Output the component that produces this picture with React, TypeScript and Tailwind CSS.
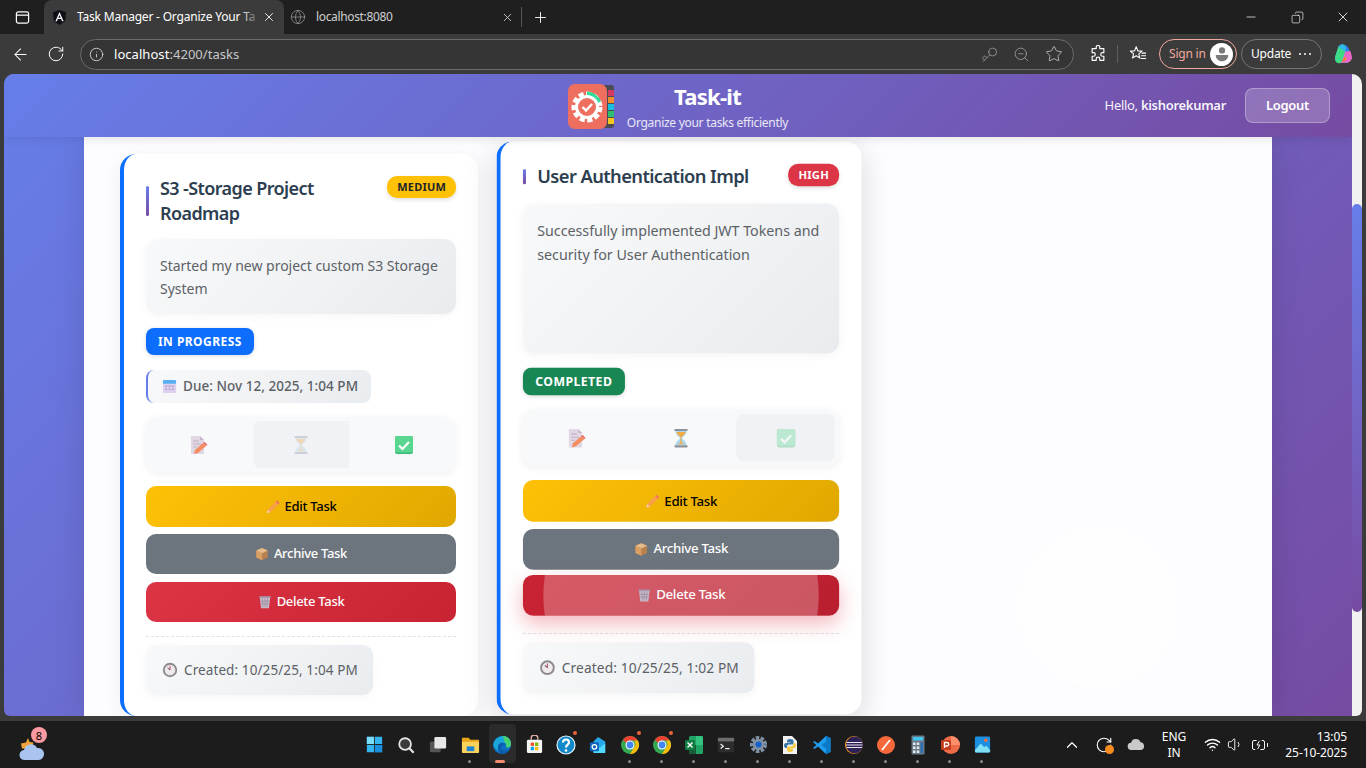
import React from "react";
import {
  ArrowLeft,
  BatteryCharging,
  ChevronUp,
  Copy,
  Globe,
  Info,
  Key,
  Minus,
  Plus,
  RotateCw,
  Star,
  Volume1,
  Wifi,
  X,
  ZoomOut,
} from "lucide-react";

/* emoji drawings, the sandbox has no colour emoji font */
const MemoIcon = ({ className = "" }: { className?: string }) => (
  <svg viewBox="0 0 20 20" className={className}>
    <path d="M3 1h9l4 4v14H3z" fill="#dccfe0" />
    <path d="M12 1l4 4h-4z" fill="#b9a8c2" />
    <path d="M5 6h6M5 9h8M5 12h4" stroke="#b3a3b8" strokeWidth="1" />
    <path d="M7 15l8-7 3 3-8 7-4 1z" fill="#f4733a" />
    <path d="M15 8l1.500-1.300 3 3L18 11z" fill="#e6534a" />
  </svg>
);
const HourglassIcon = ({ className = "" }: { className?: string }) => (
  <svg viewBox="0 0 20 20" className={className}>
    <path d="M4.500 3h11c0 4-4 5.500-4.500 7 .5 1.500 4.500 3 4.500 7h-11c0-4 4-5.500 4.500-7-.5-1.500-4.500-3-4.500-7z" fill="#a9d8f2" />
    <path d="M5.500 4h9c-.3 2.500-3.800 4-4.500 6-.7-2-4.200-3.500-4.500-6z" fill="#f2ac45" />
    <path d="M9.500 10h1l.3 4.500 3.200 1.500H6l3.200-1.500z" fill="#f2ac45" />
    <rect x="3.500" y="1" width="13" height="2" rx=".8" fill="#8c9298" />
    <rect x="3.500" y="17" width="13" height="2" rx=".8" fill="#8c9298" />
  </svg>
);
const CheckIcon = ({ className = "" }: { className?: string }) => (
  <svg viewBox="0 0 20 20" className={className}>
    <rect x="1" y="1" width="18" height="18" rx="2" fill="#3fb978" />
    <rect x="1" y="1" width="18" height="16.500" rx="2" fill="#59d68f" />
    <path d="M5 10.500l3.500 3.500L15 7" fill="none" stroke="#fff" strokeWidth="2.200" />
  </svg>
);
const PencilIcon = () => (
  <svg viewBox="0 0 16 16" className="h-[14px] w-[14px] shrink-0">
    <path d="M1 15l1-4 9-9 3 3-9 9z" fill="#f9a04b" />
    <path d="M1 15l1-4 3 3z" fill="#f3d3a8" />
    <path d="M11 2l1.500-1.500 3 3L14 5z" fill="#ef6c6c" />
  </svg>
);
const BoxIcon = () => (
  <svg viewBox="0 0 16 16" className="h-[14px] w-[14px] shrink-0">
    <path d="M8 1l6.500 3v8L8 15l-6.500-3V4z" fill="#b9814f" />
    <path d="M1.500 4L8 7v8l-6.500-3z" fill="#d9a066" />
    <path d="M8 1l6.500 3L8 7 1.500 4z" fill="#e6bb8b" />
  </svg>
);
const BinIcon = () => (
  <svg viewBox="0 0 16 16" className="h-[14px] w-[14px] shrink-0">
    <path d="M2 2h12l-1.500 13h-9z" fill="#c9bccb" />
    <path d="M5 4l.8 10M8 4v10M11 4l-.8 10M3 7h10M3.500 10h9" stroke="#8f7f95" strokeWidth=".7" />
    <rect x="1.500" y="1.500" width="13" height="2" rx=".6" fill="#a795ab" />
  </svg>
);
const ClockIcon = () => (
  <svg viewBox="0 0 16 16" className="h-4 w-4 shrink-0">
    <circle cx="8" cy="8" r="7.200" fill="#8d8a8f" />
    <circle cx="8" cy="8" r="5.300" fill="#efe9ec" />
    <path d="M8 8V3.800" stroke="#c5446b" strokeWidth="1" />
    <path d="M8 8L5.500 5.800" stroke="#555" strokeWidth="1" />
  </svg>
);
const CalendarIcon = () => (
  <svg viewBox="0 0 16 16" className="h-[15px] w-[15px] shrink-0">
    <rect x="1" y="1" width="14" height="14" rx="1.500" fill="#ddd0ee" />
    <path d="M2.500 1h11A1.500 1.500 0 0115 2.500V5H1V2.500A1.500 1.500 0 012.500 1z" fill="#58aef0" />
    <path d="M3.500 7h2v1.500h-2zM7 7h2v1.500H7zM10.500 7h2v1.500h-2zM3.500 10h2v1.500h-2zM7 10h2v1.500H7zM10.500 10h2v1.500h-2z" fill="#a99cc4" />
  </svg>
);

const AppLogo = () => (
  <svg viewBox="0 0 46 46" className="h-[46px] w-[46px] shrink-0">
    <rect x="34" y="2" width="12" height="43" rx="3" fill="#4c4a55" />
    <rect x="40" y="7" width="6" height="6" fill="#d23a63" />
    <rect x="40" y="14" width="6" height="6" fill="#f28a2e" />
    <rect x="40" y="21" width="6" height="6" fill="#19bfe0" />
    <rect x="40" y="28" width="6" height="6" fill="#2fbf71" />
    <rect x="40" y="35" width="6" height="6" fill="#f4c61f" />
    <rect x="0" y="1" width="39" height="45" rx="7" fill="#ee6f5f" />
    <circle cx="19" cy="24" r="13" fill="none" stroke="#fff" strokeWidth="5" strokeDasharray="5 2.500" />
    <path d="M19 8.500a15.500 15.500 0 0114 10l-4.500 2a11 11 0 00-9.500-7.500z" fill="#2fdc9a" />
    <circle cx="19" cy="24" r="10.500" fill="none" stroke="#fff" strokeWidth="3" />
    <path d="M14.500 24l3.500 3.500 6-6.500" fill="none" stroke="#fff" strokeWidth="2.400" />
  </svg>
);

const AngularIcon = () => (
  <svg viewBox="0 0 16 16" className="h-[15px] w-[15px] shrink-0">
    <path d="M8 0l7 2.500-1 9.500L8 16l-6-4-1-9.500z" fill="#0f0f17" />
    <path d="M8 2.200L3.600 12h1.700l.9-2.300h3.600l.9 2.300h1.700zM6.800 8.300L8 5.400l1.200 2.900z" fill="#fff" />
  </svg>
);

/* taskbar icons */
const WindowsLogo = () => (
  <svg viewBox="0 0 20 20" className="h-[17px] w-[17px]">
    <path d="M1 1h8.500v8.500H1zM10.500 1H19v8.500h-8.500zM1 10.500h8.500V19H1zM10.500 10.500H19V19h-8.500z" fill="#35b5f0" />
    <path d="M1 1h8.500v8.500H1z" fill="#7adcfb" />
    <path d="M10.500 10.500H19V19h-8.500z" fill="#1a8fe0" />
  </svg>
);
const SearchLogo = () => (
  <svg viewBox="0 0 20 20" className="h-[18px] w-[18px]">
    <circle cx="9" cy="9" r="6.500" fill="#3a3a3a" stroke="#e6e6e6" strokeWidth="2" />
    <path d="M14 14l4.500 4.500" stroke="#e6e6e6" strokeWidth="2.400" />
  </svg>
);
const TaskViewLogo = () => (
  <svg viewBox="0 0 20 20" className="h-[18px] w-[18px]">
    <rect x="1" y="6" width="12" height="12" rx="1.500" fill="#555" />
    <rect x="6" y="1" width="13" height="13" rx="1.500" fill="#e8e8e8" />
  </svg>
);
const FolderLogo = () => (
  <svg viewBox="0 0 20 20" className="h-[19px] w-[19px]">
    <path d="M1 3h7l2 2h9v13H1z" fill="#e8a51a" />
    <rect x="1" y="7" width="18" height="12" rx="1" fill="#fbd35a" />
    <rect x="6" y="12" width="8" height="5" fill="#1f86d6" />
  </svg>
);
const EdgeLogo = () => (
  <svg viewBox="0 0 20 20" className="h-5 w-5">
    <circle cx="10" cy="10" r="9" fill="#0c6fc0" />
    <path d="M1.500 9C3 3 8 1 11 1c4 0 8 3 8 8 0 3-3 4-5 3 1-3-2-5-5-4-3 1-4 4-2 8-3-1-6-4-5.500-7z" fill="#1aa6d8" />
    <path d="M11 1c4 0 8 3 8 8 0 3-3 4-5 3 1-2 0-4-1.500-5C12 4 11 2 11 1z" fill="#46d36f" />
    <path d="M7 16c-2-4-1-7 2-8 2-.6 4 .2 4.800 2C10 9 7.500 12 10 15c2 1.500 5 1 7.500-1-1.500 3.500-4.500 5.500-7.500 5-1.500-.2-2.500-1.500-3-3z" fill="#0b5cab" />
  </svg>
);
const StoreLogo = () => (
  <svg viewBox="0 0 20 20" className="h-[19px] w-[19px]">
    <path d="M6.500 5V3.500a3.500 3.500 0 017 0V5" fill="none" stroke="#e8b8b0" strokeWidth="1.400" />
    <rect x="2" y="5" width="16" height="14" rx="1.500" fill="#f4f4f4" />
    <path d="M6 8h3.500v3.500H6z" fill="#f25022" />
    <path d="M10.500 8H14v3.500h-3.500z" fill="#7fba00" />
    <path d="M6 12.500h3.500V16H6z" fill="#00a4ef" />
    <path d="M10.500 12.500H14V16h-3.500z" fill="#ffb900" />
  </svg>
);
const HelpLogo = () => (
  <svg viewBox="0 0 20 20" className="h-5 w-5">
    <circle cx="10" cy="10" r="9" fill="#1189c9" stroke="#e8f5fb" strokeWidth="1.200" />
    <path d="M7 7.500a3 3 0 116 0c0 2-3 2.300-3 5" fill="none" stroke="#fff" strokeWidth="2.200" />
    <circle cx="10" cy="15.500" r="1.300" fill="#fff" />
  </svg>
);
const OutlookLogo = () => (
  <svg viewBox="0 0 20 20" className="h-[18px] w-[18px]">
    <path d="M10 1l8 5v12H5V6z" fill="#28a8ea" />
    <path d="M5 8l7 5 6-5v11H5z" fill="#50d9ff" />
    <rect x="1" y="7" width="10" height="10" rx="1.500" fill="#0f63b8" />
    <circle cx="6" cy="12" r="2.500" fill="none" stroke="#fff" strokeWidth="1.400" />
  </svg>
);
const ChromeLogo = () => (
  <svg viewBox="0 0 20 20" className="h-5 w-5">
    <circle cx="10" cy="10" r="9" fill="#34a853" />
    <path d="M10 1a9 9 0 017.800 4.500H10a4.500 4.500 0 00-4 2.500L2.800 4.700A9 9 0 0110 1z" fill="#ea4335" />
    <path d="M17.800 5.500A9 9 0 0110 19l4-6.500a4.500 4.500 0 00-.300-7z" fill="#fbbc05" />
    <circle cx="10" cy="10" r="4.500" fill="#fff" />
    <circle cx="10" cy="10" r="3.400" fill="#4285f4" />
  </svg>
);
const ExcelLogo = () => (
  <svg viewBox="0 0 20 20" className="h-5 w-5">
    <rect x="5" y="1" width="14" height="18" rx="1.500" fill="#21a366" />
    <path d="M12 1h5.500A1.500 1.500 0 0119 2.500V10h-7z" fill="#33c481" />
    <path d="M5 10h7v9H6.500A1.500 1.500 0 015 17.500z" fill="#185c37" />
    <rect x="1" y="5" width="10" height="10" rx="1.200" fill="#107c41" />
    <path d="M3.500 7.500l5 5M8.500 7.500l-5 5" stroke="#fff" strokeWidth="1.400" />
  </svg>
);
const TerminalLogo = () => (
  <svg viewBox="0 0 20 20" className="h-[18px] w-[18px]">
    <rect x="1" y="2" width="18" height="16" rx="1" fill="#2d2d2d" />
    <rect x="1" y="2" width="18" height="4" fill="#6f6f6f" />
    <path d="M4 9l3 2.500L4 14" fill="none" stroke="#eee" strokeWidth="1.400" />
    <path d="M9 14h5" stroke="#eee" strokeWidth="1.400" />
  </svg>
);
const SettingsLogo = () => (
  <svg viewBox="0 0 20 20" className="h-[19px] w-[19px]">
    <circle cx="10" cy="10" r="7" fill="none" stroke="#8191a3" strokeWidth="4" strokeDasharray="3.500 1.500" />
    <circle cx="10" cy="10" r="6" fill="#8191a3" />
    <circle cx="10" cy="10" r="3.200" fill="#1463c9" />
  </svg>
);
const PythonLogo = () => (
  <svg viewBox="0 0 20 20" className="h-5 w-5">
    <path d="M3 1h9l5 5v13H3z" fill="#f2f2f2" />
    <path d="M10 4c-2 0-3 .8-3 2v1.500h3.500V8H6c-1.200 0-2 1-2 2.500S4.800 13 6 13h1v-1.500c0-1 .8-2 2-2h3c1 0 1.500-.6 1.500-1.500V6c0-1.200-1.500-2-3.500-2z" fill="#3775a9" />
    <path d="M10 17c2 0 3-.8 3-2v-1.500H9.500V13H14c1.200 0 2-1 2-2.500S15.200 8 14 8h-.500v1.500c0 1-.8 2-2 2h-3c-1 0-1.500.6-1.500 1.500v2c0 1.200 1.500 2 3 2z" fill="#f5c93a" />
  </svg>
);
const VsCodeLogo = () => (
  <svg viewBox="0 0 20 20" className="h-5 w-5">
    <path d="M14 1l4.500 2v14L14 19 6 11.500 2.500 14 1 13l3.500-3L1 7l1.500-1L6 8.500z" fill="#1f9cf0" />
    <path d="M14 1l4.500 2v14L14 19V13.500L9.500 10 14 6.500z" fill="#0b7ac6" />
  </svg>
);
const EclipseLogo = () => (
  <svg viewBox="0 0 20 20" className="h-5 w-5">
    <circle cx="10" cy="10" r="9" fill="#f7941e" />
    <circle cx="10.500" cy="10" r="8.500" fill="#2c2255" />
    <path d="M2.500 7.500h15.500M2 10h16.500M2.500 12.500h15.500" stroke="#e8e4f2" strokeWidth="1.200" />
  </svg>
);
const PostmanLogo = () => (
  <svg viewBox="0 0 20 20" className="h-5 w-5">
    <circle cx="10" cy="10" r="9" fill="#f4683a" />
    <path d="M6 15l8-10" stroke="#fff" strokeWidth="1.800" />
  </svg>
);
const CalcLogo = () => (
  <svg viewBox="0 0 20 20" className="h-5 w-5">
    <rect x="3.500" y="0.500" width="13" height="19" rx="1" fill="#6b7a89" />
    <rect x="5" y="2" width="10" height="3.500" fill="#3fc4ee" />
    <path d="M5 7.500h2.500V10H5zM8.800 7.500h2.500V10H8.800zM5 11.500h2.500V14H5zM8.800 11.500h2.500V14H8.800zM5 15.500h2.500V18H5zM8.800 15.500h2.500V18H8.800z" fill="#e6e9ec" />
    <path d="M12.500 7.500H15V18h-2.500z" fill="#2d6fb3" />
  </svg>
);
const PptLogo = () => (
  <svg viewBox="0 0 20 20" className="h-5 w-5">
    <circle cx="11" cy="10" r="9" fill="#ed6c47" />
    <path d="M11 1a9 9 0 019 9h-9z" fill="#ff8f6b" />
    <rect x="1" y="5" width="10" height="10" rx="1.200" fill="#c43e1c" />
    <path d="M4.500 13V7.500H7a1.700 1.700 0 010 3.500H4.500" fill="none" stroke="#fff" strokeWidth="1.300" />
  </svg>
);
const PhotosLogo = () => (
  <svg viewBox="0 0 20 20" className="h-[19px] w-[19px]">
    <rect x="2" y="1.500" width="16" height="17" rx="1.500" fill="#1d8fe1" />
    <path d="M2 16l6-7 4 4 2-2 4 5v1a1.500 1.500 0 01-1.500 1.500h-13A1.500 1.500 0 012 17z" fill="#7fe0f5" />
    <circle cx="13.500" cy="5.500" r="1.800" fill="#ff6a3c" />
  </svg>
);

type TaskbarApp = { id: string; icon: React.ReactNode; dot?: boolean; alert?: boolean; active?: boolean };

const taskbarApps: TaskbarApp[] = [
  { id: "start", icon: <WindowsLogo /> },
  { id: "search", icon: <SearchLogo /> },
  { id: "taskview", icon: <TaskViewLogo /> },
  { id: "explorer", icon: <FolderLogo />, dot: true },
  { id: "edge", icon: <EdgeLogo />, active: true },
  { id: "store", icon: <StoreLogo /> },
  { id: "help", icon: <HelpLogo />, alert: true },
  { id: "outlook", icon: <OutlookLogo /> },
  { id: "chrome", icon: <ChromeLogo />, dot: true, alert: true },
  { id: "chrome2", icon: <ChromeLogo />, dot: true, alert: true },
  { id: "excel", icon: <ExcelLogo />, dot: true },
  { id: "terminal", icon: <TerminalLogo />, dot: true },
  { id: "settings", icon: <SettingsLogo />, dot: true },
  { id: "python", icon: <PythonLogo />, dot: true },
  { id: "vscode", icon: <VsCodeLogo />, dot: true },
  { id: "eclipse", icon: <EclipseLogo />, dot: true },
  { id: "postman", icon: <PostmanLogo />, dot: true },
  { id: "calc", icon: <CalcLogo />, dot: true },
  { id: "ppt", icon: <PptLogo />, dot: true },
  { id: "photos", icon: <PhotosLogo />, dot: true },
];

const BrowserChrome = () => (
  <>
    <div className="flex h-[34px] shrink-0 items-stretch bg-[#1f1f1f] text-white">
      <div className="flex w-[44px] items-center justify-center">
        <svg viewBox="0 0 16 16" className="h-[15px] w-[15px]" fill="none" stroke="#fff" strokeWidth="1.300">
          <rect x="1.500" y="2" width="13" height="12" rx="2" />
          <path d="M1.500 5.500h13" />
        </svg>
      </div>
      <div className="relative flex w-[240px] items-center rounded-t-lg bg-[#3b3b3b] pl-2">
        <AngularIcon />
        <span className="ml-[10px] w-[178px] truncate text-[12px] tracking-[-0.2px] [text-overflow:clip]">
          Task Manager - Organize Your Tasks
        </span>
        <div className="absolute top-2 left-[196px] h-[18px] w-[20px] bg-gradient-to-r from-transparent to-[#3b3b3b]" />
        <X className="absolute right-[8px] h-[14px] w-[14px]" strokeWidth={1.5} />
      </div>
      <div className="relative flex w-[237px] items-center pl-[6px]">
        <Globe className="h-4 w-4 text-[#9a9a9a]" strokeWidth={1.1} />
        <span className="ml-[10px] text-[12px] tracking-[-0.35px] text-[#cfcfcf]">localhost:8080</span>
        <X className="absolute right-[7px] h-[13px] w-[13px] text-[#ddd]" strokeWidth={1.5} />
      </div>
      <div className="my-[7px] w-px bg-[#555]" />
      <div className="flex w-[37px] items-center justify-center">
        <Plus className="h-[17px] w-[17px]" strokeWidth={1.3} />
      </div>
      <div className="ml-auto flex items-center">
        <div className="flex w-[46px] justify-center">
          <Minus className="h-[14px] w-[14px]" strokeWidth={1.2} />
        </div>
        <div className="flex w-[46px] justify-center">
          <Copy className="h-[13px] w-[13px] -scale-x-100" strokeWidth={1.2} />
        </div>
        <div className="flex w-[46px] justify-center">
          <X className="h-4 w-4" strokeWidth={1.2} />
        </div>
      </div>
    </div>
    <div className="flex h-[40px] shrink-0 items-center bg-[#3b3b3b] pr-[8px] text-white">
      <div className="flex w-[40px] justify-center">
        <ArrowLeft className="h-[19px] w-[19px]" strokeWidth={1.3} />
      </div>
      <div className="flex w-[32px] justify-center">
        <RotateCw className="h-[18px] w-[18px]" strokeWidth={1.3} />
      </div>
      <div className="ml-[8px] flex h-[31px] w-[994px] items-center rounded-full border border-[#6b6b6b] bg-[#353535] pr-[10px] pl-[8px]">
        <Info className="h-[15px] w-[15px] text-[#d8d8d8]" strokeWidth={1.4} />
        <span className="ml-[10px] pt-[1px] text-[13px] tracking-[0.05px]">
          localhost<span className="text-[#c8c8c8]">:4200/tasks</span>
        </span>
        <div className="ml-auto flex items-center gap-[15px] text-[#a8a8a8]">
          <Key className="h-[17px] w-[17px] rotate-180" strokeWidth={1} />
          <ZoomOut className="h-[17px] w-[17px]" strokeWidth={1.1} />
          <Star className="h-[18px] w-[18px] text-[#c8c8c8]" strokeWidth={1.1} />
        </div>
      </div>
      <svg viewBox="0 0 20 20" className="ml-[15px] h-[18px] w-[18px]" fill="none" stroke="#fff" strokeWidth="1.300">
        <path d="M8 2.500a2 2 0 014 0V4h4.500v4.500H15a2 2 0 000 4h1.500V17H12v-1.500a2 2 0 00-4 0V17H3.500v-4.500H5a2 2 0 000-4H3.500V4H8z" strokeLinejoin="round" />
      </svg>
      <div className="ml-[10px] h-[18px] w-px bg-[#5f5f5f]" />
      <svg viewBox="0 0 20 20" className="ml-[11px] h-[18px] w-[18px]" fill="none" stroke="#fff" strokeWidth="1.200">
        <path d="M8 2l1.800 4.500 4.700.3-3.600 3 1.200 4.700L8 12l-4.100 2.500 1.200-4.700-3.600-3 4.700-.3z" strokeLinejoin="round" />
        <path d="M14 9h5M13.500 12h5.500M13 15h6" />
      </svg>
      <div className="ml-[12px] flex h-[30px] w-[78px] items-center justify-between rounded-full border border-[#f0a79d] pr-[3px] pl-[9px]">
        <span className="text-[12px] tracking-[-0.2px] text-[#f3a99f]">Sign in</span>
        <div className="flex h-[23px] w-[23px] items-center justify-center rounded-full bg-white">
          <svg viewBox="0 0 20 20" className="h-[18px] w-[18px]" fill="#7a7a7a">
            <circle cx="10" cy="6" r="3.500" />
            <path d="M3 11h14c0 4-3 7-7 7s-7-3-7-7z" />
          </svg>
        </div>
      </div>
      <div className="ml-[4px] flex h-[30px] w-[81px] items-center justify-between rounded-full border border-[#757575] pr-[10px] pl-[9px]">
        <span className="text-[12px] tracking-[-0.2px]">Update</span>
        <span className="flex gap-[3px]">
          <i className="h-[2px] w-[2px] rounded-full bg-white" />
          <i className="h-[2px] w-[2px] rounded-full bg-white" />
          <i className="h-[2px] w-[2px] rounded-full bg-white" />
        </span>
      </div>
      <svg viewBox="0 0 20 20" className="ml-[10px] h-[22px] w-[22px]">
        <path d="M6 3c3-3 6-2 7 1l3 9c1 3-1 5-3 5H7c-3 0-5-3-4-6z" fill="#2fb8e8" />
        <path d="M3 12l3-9c1 3 5 3 6 5l-3 9c-1 2-5 2-6-1z" fill="#3ddc84" />
        <path d="M9 17l3-9c1-2 4-2 5 0l1 4c1 3-2 6-5 6H7z" fill="#e868c8" />
        <path d="M12 8c1-2 1-4 0-6 2 0 3 2 4 5z" fill="#2f7fe8" />
        <path d="M9 17c2 0 3-1 4-3l-1-2-3 5z" fill="#f5821f" />
      </svg>
    </div>
  </>
);

type TaskCardProps = {
  title: string;
  priority: string;
  priorityClass: string;
  description: string;
  status: string;
  statusClass: string;
  due?: string;
  created: string;
  focusedStep: number;
  focusedClass: string;
  headerClass: string;
  deleteClass: string;
  rippling?: boolean;
  className?: string;
};

const softBox = "bg-[linear-gradient(135deg,#f8f9fa,#e9ecef)]";

const TaskCard = ({
  title,
  priority,
  priorityClass,
  description,
  status,
  statusClass,
  due,
  created,
  focusedStep,
  focusedClass,
  headerClass,
  deleteClass,
  rippling,
  className = "",
}: TaskCardProps) => {
  const steps = [MemoIcon, HourglassIcon, CheckIcon];
  return (
    <div
      className={`flex h-[562px] w-[358px] shrink-0 flex-col rounded-2xl border-l-4 border-[#0d6efd] bg-white pt-[22px] pr-[22px] pb-[21px] pl-[22px] ${className}`}
    >
      <div className={`flex items-start justify-between gap-3 ${headerClass}`}>
        <h3 className="relative pl-[14px] text-[18px] leading-[25px] font-semibold tracking-[-0.6px] text-[#2c3e50]">
          <span className="absolute top-[20%] left-0 h-[60%] w-[3px] rounded-sm bg-gradient-to-b from-[#667eea] to-[#764ba2]" />
          {title}
        </h3>
        <span
          className={`shrink-0 rounded-[10px] px-[10px] py-[3px] text-[11px] leading-[16px] font-bold tracking-[0.2px] shadow-[0_2px_4px_rgba(0,0,0,0.12)] ${priorityClass}`}
        >
          {priority}
        </span>
      </div>
      <div
        className={`min-h-0 flex-1 rounded-xl px-[14px] pt-[15px] pb-[14px] text-[14px] leading-[23px] tracking-[-0.02px] text-[#5c6166] shadow-[0_2px_8px_rgba(0,0,0,0.04)] ${softBox}`}
      >
        {description}
      </div>
      <span
        className={`mt-[14px] flex h-[27px] w-fit items-center rounded-lg px-3 text-[12px] font-bold tracking-[0.45px] text-white shadow-[0_1px_4px_rgba(0,0,0,0.15)] ${statusClass}`}
      >
        {status}
      </span>
      {due && (
        <div className={`mt-[15px] flex h-[33px] w-fit items-center gap-[6px] rounded-lg border-l-2 border-[#667eea] pr-[13px] pl-[14px] text-[13.5px] font-medium tracking-[0.04px] text-[#5c6166] ${softBox}`}>
          <CalendarIcon />
          {due}
        </div>
      )}
      <div className="mt-[14px] flex h-[55px] shrink-0 gap-[6px] rounded-xl bg-[#f8f9fa] px-1 py-1 shadow-[0_2px_8px_rgba(0,0,0,0.06)]">
        {steps.map((Step, i) => (
          <div key={i} className={`flex flex-1 items-center justify-center ${i === focusedStep ? focusedClass : ""}`}>
            <Step className={`h-[20px] w-[20px] ${i === focusedStep ? "opacity-35" : i === 0 ? "opacity-80" : ""}`} />
          </div>
        ))}
      </div>
      <button className="mt-[14px] flex h-[41px] shrink-0 items-center justify-center gap-[5px] rounded-[10px] bg-[linear-gradient(135deg,#ffc107,#e0a800)] text-[13px] font-medium tracking-[-0.3px] text-black">
        <PencilIcon />
        Edit Task
      </button>
      <button className="mt-[7px] flex h-[40px] shrink-0 items-center justify-center gap-[5px] rounded-[10px] bg-[#6c757d] text-[13px] font-medium tracking-[-0.3px] text-white">
        <BoxIcon />
        Archive Task
      </button>
      <button
        className={`relative mt-[8px] flex h-[40px] shrink-0 items-center justify-center gap-[5px] overflow-hidden rounded-[10px] text-[13px] font-medium tracking-[-0.3px] text-white ${deleteClass}`}
      >
        {rippling && <span className="absolute top-1/2 left-1/2 h-[270px] w-[270px] -translate-x-1/2 -translate-y-1/2 rounded-full bg-white/25" />}
        <span className="relative flex items-center gap-[5px]">
          <BinIcon />
          Delete Task
        </span>
      </button>
      <div className="mt-[14px] border-t border-dashed border-[#dee2e6]" />
      <div className={`mt-2 flex h-[50px] w-fit items-center gap-[6px] rounded-[10px] pr-[15px] pl-4 text-[13.5px] tracking-[0.1px] text-[#5c6166] shadow-[0_2px_8px_rgba(0,0,0,0.04)] ${softBox}`}>
        <ClockIcon />
        {created}
      </div>
    </div>
  );
};

const Taskbar = () => (
  <div className="flex h-[47px] shrink-0 items-center bg-[#1c1c1c] text-white">
    <div className="relative h-full w-[358px] shrink-0">
      <svg viewBox="0 0 26 24" className="absolute top-[17px] left-[19px] h-[24px] w-[26px]">
        <path d="M9 0l1.500 4 4 .5-2 6H3l-1-5 5-1z" fill="#f2a33a" />
        <path d="M6 22a5 5 0 01-1-10 7 7 0 0113-2 6 6 0 012 12z" fill="#a9c4ee" />
      </svg>
      <div className="absolute top-[6px] left-[31px] flex h-[16px] w-[16px] items-center justify-center rounded-full bg-[#ff9aa2] text-[11px] leading-none text-black">
        8
      </div>
    </div>
    <div className="flex h-full">
      {taskbarApps.map((app) => (
        <div key={app.id} className="relative flex h-full w-8 items-center justify-center">
          {app.active && <div className="absolute top-[3px] bottom-[5px] left-[3px] w-[27px] rounded bg-[#2b2b2b]" />}
          <div className="relative">{app.icon}</div>
          {app.alert && <i className="absolute top-[10px] right-[5px] h-[4px] w-[4px] rounded-full bg-[#e8643c]" />}
          {app.dot && <i className="absolute bottom-[5px] left-[14px] h-[3px] w-[3px] rounded-full bg-[#8a8a8a]" />}
          {app.active && <i className="absolute bottom-[5px] left-[9px] h-[3px] w-[10px] rounded-full bg-[#f28b6f]" />}
        </div>
      ))}
    </div>
    <div className="ml-[65px] flex w-[18px] justify-center">
      <ChevronUp className="h-[18px] w-[18px]" strokeWidth={1.6} />
    </div>
    <div className="relative ml-[14px] w-[18px]">
      <RotateCw className="h-[18px] w-[18px]" strokeWidth={1.5} />
      <i className="absolute right-[-1px] bottom-[0px] h-[9px] w-[9px] rounded-full bg-[#f78c1f]" />
    </div>
    <svg viewBox="0 0 20 14" className="ml-[14px] h-[13px] w-[18px]" fill="#c9c9c9">
      <path d="M5 13a4 4 0 01-.5-8A5.500 5.500 0 0115 4.500 4.300 4.300 0 0115.500 13z" />
    </svg>
    <div className="ml-[9px] flex w-[40px] flex-col items-center text-[12px] leading-[16px]">
      <span>ENG</span>
      <span>IN</span>
    </div>
    <Wifi className="ml-[10px] h-[17px] w-[17px]" strokeWidth={2} />
    <Volume1 className="ml-[6px] h-[17px] w-[17px]" strokeWidth={1.3} />
    <BatteryCharging className="ml-[7px] h-[18px] w-[18px]" strokeWidth={1.3} />
    <div className="ml-[12px] flex w-[66px] flex-col items-end text-[12px] leading-[16px] tracking-[-0.1px]">
      <span>13:05</span>
      <span>25-10-2025</span>
    </div>
  </div>
);

export default function App() {
  return (
    <div className="flex h-screen w-screen flex-col overflow-hidden bg-[#3b3b3b] font-['Noto_Sans','Open_Sans',sans-serif]">
      <BrowserChrome />

      <div className="flex min-h-0 flex-1 pr-1 pb-[5px] pl-1">
        <div className="relative flex min-w-0 flex-1 flex-col overflow-hidden rounded-tl-[10px] rounded-bl-[6px] bg-[linear-gradient(135deg,#667eea,#764ba2)]">
          <header className="relative z-20 grid h-[63px] shrink-0 grid-cols-[1fr_auto_1fr] items-center bg-[linear-gradient(135deg,#667eea,#764ba2)] shadow-[0_2px_10px_rgba(0,0,0,0.1)]">
            <div />
            <div className="flex items-center gap-[13px]">
              <AppLogo />
              <div className="flex flex-col items-center pt-[2px] text-white">
                <span className="text-[22px] leading-[28px] font-bold tracking-[-0.7px]">Task-it</span>
                <span className="mt-[4px] text-[12px] leading-[18px] tracking-[-0.28px] text-white/85">
                  Organize your tasks efficiently
                </span>
              </div>
            </div>
            <div className="flex items-center justify-end gap-[19px] pr-[22px] text-white">
              <span className="text-[13px] tracking-[-0.3px] text-white/95">
                Hello, <b className="font-semibold">kishorekumar</b>
              </span>
              <button className="h-[35px] w-[85px] rounded-lg border border-white/30 bg-white/20 text-[13px] font-semibold tracking-[-0.3px]">
                Logout
              </button>
            </div>
          </header>

          <main className="relative mx-[80px] min-h-0 flex-1 overflow-hidden bg-[#fdfdff] pt-[17px] pl-[36px] shadow-[0_0_30px_rgba(0,0,0,0.12)]">
            <div className="absolute top-[390px] left-[934px] h-[160px] w-[160px] rounded-full bg-white/60" />
            <div className="relative flex items-start gap-[21.500px]">
              <TaskCard
                title="S3 -Storage Project Roadmap"
                priority="MEDIUM"
                priorityClass="bg-[#ffc107] text-[#212529]"
                description="Started my new project custom S3 Storage System"
                status="IN PROGRESS"
                statusClass="bg-[#0d6efd]"
                due="Due: Nov 12, 2025, 1:04 PM"
                created="Created: 10/25/25, 1:04 PM"
                focusedStep={1}
                focusedClass="rounded-l-lg bg-[#f0f2f5]"
                headerClass="mb-[13px]"
                deleteClass="bg-[linear-gradient(135deg,#dc3545,#c82333)]"
                className="shadow-[0_4px_20px_rgba(0,0,0,0.06)]"
              />
              <TaskCard
                title="User Authentication Impl"
                priority="HIGH"
                priorityClass="bg-[#dc3545] text-white"
                description="Successfully implemented JWT Tokens and security for User Authentication"
                status="COMPLETED"
                statusClass="bg-[#198754]"
                created="Created: 10/25/25, 1:02 PM"
                focusedStep={2}
                focusedClass="rounded-lg bg-[#f0f2f5]"
                headerClass="mb-[14px]"
                deleteClass="-translate-y-[3px] bg-[linear-gradient(135deg,#c82333,#b91f30)] shadow-[0_8px_20px_rgba(220,53,69,0.35)]"
                rippling
                className="-translate-y-[7px] scale-[1.02] shadow-[0_8px_30px_rgba(0,0,0,0.15)]"
              />
            </div>
          </main>
        </div>

        <div className="relative w-[10px] shrink-0 rounded-tr-[10px] rounded-br-[6px] bg-[#f1f1f1]">
          <div className="absolute top-[130px] left-0 h-[408px] w-[10px] rounded-full bg-gradient-to-b from-[#667eea] to-[#764ba2]" />
        </div>
      </div>

      <Taskbar />
    </div>
  );
}
